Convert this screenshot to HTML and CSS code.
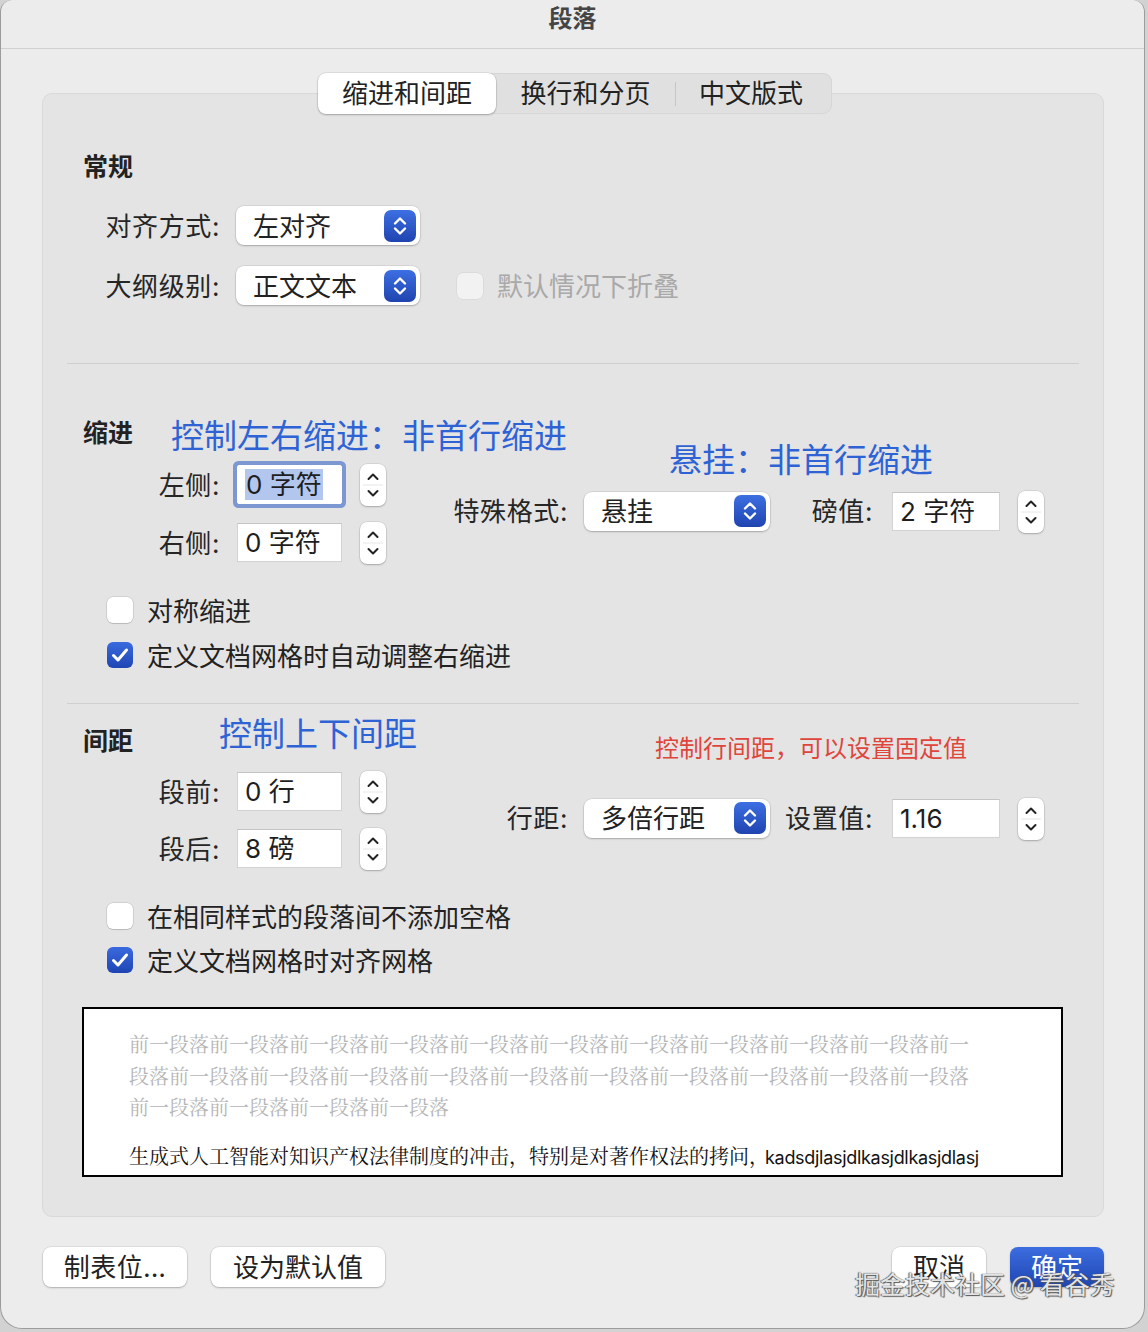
FILE: index.html
```html
<!DOCTYPE html>
<html lang="zh-CN">
<head>
<meta charset="utf-8">
<title>段落</title>
<link rel="stylesheet" href="styles.css">
</head>
<body>
<div class="window">
  <div class="titlebar">段落</div>
  <div class="content">
    <div class="tabs">
      <div class="tab t1 active">缩进和间距</div>
      <div class="tab t2">换行和分页</div>
      <div class="tab-sep"></div>
      <div class="tab t3">中文版式</div>
    </div>

    <div class="group">
      <div class="heading">常规</div>
      <div class="frow first">
        <span class="lbl">对齐方式:</span>
        <div class="select">左对齐<span class="sel-btn"><svg width="32" height="32" viewBox="0 0 32 32"><path d="M11 13.5 L16 8.5 L21 13.5 M11 18.5 L16 23.5 L21 18.5" fill="none" stroke="#fff" stroke-width="2.4" stroke-linecap="round" stroke-linejoin="round"/></svg></span></div>
      </div>
      <div class="frow second">
        <span class="lbl">大纲级别:</span>
        <div class="select">正文文本<span class="sel-btn"><svg width="32" height="32" viewBox="0 0 32 32"><path d="M11 13.5 L16 8.5 L21 13.5 M11 18.5 L16 23.5 L21 18.5" fill="none" stroke="#fff" stroke-width="2.4" stroke-linecap="round" stroke-linejoin="round"/></svg></span></div>
        <span class="cb disabled"></span><span class="cbtext muted">默认情况下折叠</span>
      </div>

      <div class="divider d1"></div>

      <div class="hrow h-indent">
        <span class="heading">缩进</span>
        <span class="note note-indent">控制左右缩进：非首行缩进</span>
      </div>
      <div class="fields f-indent">
        <span class="note note-hang">悬挂：非首行缩进</span>
        <div class="lcol">
          <div class="lrow">
            <span class="lbl">左侧:</span>
            <div class="input focus"><span class="sel-text">0 字符</span></div>
            <span class="stepper"><svg width="26" height="42" viewBox="0 0 26 42"><path d="M3 21 H23" stroke="#e6e6e6" stroke-width="1"/><path d="M8.5 15 L13 10.5 L17.5 15 M8.5 27 L13 31.5 L17.5 27" fill="none" stroke="#222" stroke-width="2" stroke-linecap="round" stroke-linejoin="round"/></svg></span>
          </div>
          <div class="lrow">
            <span class="lbl">右侧:</span>
            <div class="input">0 字符</div>
            <span class="stepper"><svg width="26" height="42" viewBox="0 0 26 42"><path d="M3 21 H23" stroke="#e6e6e6" stroke-width="1"/><path d="M8.5 15 L13 10.5 L17.5 15 M8.5 27 L13 31.5 L17.5 27" fill="none" stroke="#222" stroke-width="2" stroke-linecap="round" stroke-linejoin="round"/></svg></span>
          </div>
        </div>
        <div class="rrow">
          <span class="rlbl1">特殊格式:</span>
          <div class="select wide">悬挂<span class="sel-btn"><svg width="32" height="32" viewBox="0 0 32 32"><path d="M11 13.5 L16 8.5 L21 13.5 M11 18.5 L16 23.5 L21 18.5" fill="none" stroke="#fff" stroke-width="2.4" stroke-linecap="round" stroke-linejoin="round"/></svg></span></div>
          <span class="rlbl2">磅值:</span>
          <div class="input rin">2 字符</div>
          <span class="stepper"><svg width="26" height="42" viewBox="0 0 26 42"><path d="M3 21 H23" stroke="#e6e6e6" stroke-width="1"/><path d="M8.5 15 L13 10.5 L17.5 15 M8.5 27 L13 31.5 L17.5 27" fill="none" stroke="#222" stroke-width="2" stroke-linecap="round" stroke-linejoin="round"/></svg></span>
        </div>
      </div>

      <div class="cbrow c1"><span class="cb"></span><span class="cbtext">对称缩进</span></div>
      <div class="cbrow c2"><span class="cb on"><svg width="26" height="26" viewBox="0 0 26 26"><path d="M6.5 13.5 L11 18 L19.5 8" fill="none" stroke="#fff" stroke-width="3" stroke-linecap="round" stroke-linejoin="round"/></svg></span><span class="cbtext">定义文档网格时自动调整右缩进</span></div>

      <div class="divider d2"></div>

      <div class="hrow h-space">
        <span class="heading">间距</span>
        <span class="note note-space">控制上下间距</span>
      </div>
      <div class="fields f-space">
        <span class="note-red">控制行间距，可以设置固定值</span>
        <div class="lcol gap18">
          <div class="lrow">
            <span class="lbl">段前:</span>
            <div class="input">0 行</div>
            <span class="stepper"><svg width="26" height="42" viewBox="0 0 26 42"><path d="M3 21 H23" stroke="#e6e6e6" stroke-width="1"/><path d="M8.5 15 L13 10.5 L17.5 15 M8.5 27 L13 31.5 L17.5 27" fill="none" stroke="#222" stroke-width="2" stroke-linecap="round" stroke-linejoin="round"/></svg></span>
          </div>
          <div class="lrow">
            <span class="lbl">段后:</span>
            <div class="input">8 磅</div>
            <span class="stepper"><svg width="26" height="42" viewBox="0 0 26 42"><path d="M3 21 H23" stroke="#e6e6e6" stroke-width="1"/><path d="M8.5 15 L13 10.5 L17.5 15 M8.5 27 L13 31.5 L17.5 27" fill="none" stroke="#222" stroke-width="2" stroke-linecap="round" stroke-linejoin="round"/></svg></span>
          </div>
        </div>
        <div class="rrow">
          <span class="rlbl1">行距:</span>
          <div class="select wide">多倍行距<span class="sel-btn"><svg width="32" height="32" viewBox="0 0 32 32"><path d="M11 13.5 L16 8.5 L21 13.5 M11 18.5 L16 23.5 L21 18.5" fill="none" stroke="#fff" stroke-width="2.4" stroke-linecap="round" stroke-linejoin="round"/></svg></span></div>
          <span class="rlbl2">设置值:</span>
          <div class="input rin">1.16</div>
          <span class="stepper"><svg width="26" height="42" viewBox="0 0 26 42"><path d="M3 21 H23" stroke="#e6e6e6" stroke-width="1"/><path d="M8.5 15 L13 10.5 L17.5 15 M8.5 27 L13 31.5 L17.5 27" fill="none" stroke="#222" stroke-width="2" stroke-linecap="round" stroke-linejoin="round"/></svg></span>
        </div>
      </div>

      <div class="cbrow c3"><span class="cb"></span><span class="cbtext">在相同样式的段落间不添加空格</span></div>
      <div class="cbrow c4"><span class="cb on"><svg width="26" height="26" viewBox="0 0 26 26"><path d="M6.5 13.5 L11 18 L19.5 8" fill="none" stroke="#fff" stroke-width="3" stroke-linecap="round" stroke-linejoin="round"/></svg></span><span class="cbtext">定义文档网格时对齐网格</span></div>

      <div class="preview">
        <div class="pv-gray">前一段落前一段落前一段落前一段落前一段落前一段落前一段落前一段落前一段落前一段落前一</div>
        <div class="pv-gray">段落前一段落前一段落前一段落前一段落前一段落前一段落前一段落前一段落前一段落前一段落</div>
        <div class="pv-gray">前一段落前一段落前一段落前一段落</div>
        <div class="pv-main">生成式人工智能对知识产权法律制度的冲击，特别是对著作权法的拷问，<span class="latin">kadsdjlasjdlkasjdlkasjdlasj</span></div>
      </div>
    </div>

    <div class="buttons">
      <div class="btn b-tabs">制表位...</div>
      <div class="btn b-default">设为默认值</div>
      <div class="btn b-cancel">取消</div>
      <div class="btn b-ok">确定</div>
    </div>
  </div>
  <div class="watermark">掘金技术社区 @ 看谷秀</div>
</div>
</body>
</html>
```

FILE: styles.css
```css
* { box-sizing: border-box; }
html, body { margin: 0; padding: 0; }
body {
  width: 1148px;
  height: 1332px;
  overflow: hidden;
  background: #d2d2d2;
  font-family: "Inter", "Noto Sans CJK SC", sans-serif;
  color: #262626;
}
.window {
  position: relative;
  width: 1145px;
  height: 1329px;
  background: #ececec;
  border: 1px solid #9c9c9c;
  border-top: none;
  border-radius: 12px 12px 22px 22px;
  overflow: hidden;
}
.titlebar {
  height: 49px;
  border-bottom: 1px solid #d0d0d0;
  text-align: center;
  font-size: 24px;
  font-weight: 700;
  line-height: 34px;
  color: #454545;
  font-family: "Noto Sans CJK SC", sans-serif;
}
.content {
  padding: 24px 40px 0 41px;
}
.tabs {
  position: relative;
  z-index: 2;
  display: flex;
  align-items: center;
  margin-left: 276px;
  width: 514px;
  height: 41px;
  margin-bottom: -21px;
  background: #e0e0e0;
  border-radius: 9px;
  box-shadow: inset 0 0 0 1px #d6d6d6;
}
.tab {
  height: 41px;
  display: flex;
  align-items: center;
  justify-content: center;
  padding-bottom: 4px;
  font-size: 26px;
  color: #222;
  font-family: "Noto Sans CJK SC", sans-serif;
}
.t1 { width: 178px; }
.t2 { width: 179px; }
.t3 { width: 156px; padding-right: 6px; }
.tab-sep { width: 1px; height: 24px; background: #c6c6c6; }
.tab.active {
  background: #fff;
  border-radius: 8px;
  box-shadow: 0 0 0 0.5px rgba(0,0,0,0.12), 0 1px 2px rgba(0,0,0,0.25);
}
.group {
  background: #e4e4e4;
  border: 1px solid #d9d9d9;
  border-radius: 10px;
  padding: 58px 0 39px 0;
}
.heading {
  font-size: 25px;
  font-weight: 700;
  line-height: 26px;
  height: 30px;
  padding-left: 40px;
  padding-bottom: 4px;
  color: #222;
  font-family: "Noto Sans CJK SC", sans-serif;
}
.frow {
  display: flex;
  align-items: center;
  height: 39px;
}
.frow.first { margin-top: 24px; }
.frow.second { margin-top: 21px; }
.lbl {
  flex: none;
  width: 177px;
  text-align: right;
  font-size: 26px;
  padding-bottom: 3px;
  letter-spacing: 0.6px;
}
.select {
  flex: none;
  margin-left: 16px;
  width: 184px;
  height: 39px;
  background: #fff;
  border-radius: 8px;
  box-shadow: 0 0 0 0.5px rgba(0,0,0,0.12), 0 1px 2px rgba(0,0,0,0.22);
  display: flex;
  align-items: center;
  padding-left: 17px;
  padding-bottom: 3px;
  font-size: 26px;
  color: #222;
}
.select.wide { width: 186px; }
.sel-btn {
  margin-left: auto;
  margin-right: 4px;
  margin-bottom: -3px;
  width: 32px;
  height: 32px;
  border-radius: 7px;
  background: linear-gradient(#3d6fe2, #1f44b0);
  display: flex;
  align-items: center;
  justify-content: center;
}
.cb {
  flex: none;
  width: 26px;
  height: 26px;
  border-radius: 6px;
  background: #fff;
  box-shadow: 0 0 0 0.5px rgba(0,0,0,0.16), 0 1px 1px rgba(0,0,0,0.12);
  display: flex;
}
.cb.disabled { background: #f2f2f2; box-shadow: 0 0 0 0.5px rgba(0,0,0,0.08); }
.frow .cb { margin-left: 37px; }
.cb.on { background: linear-gradient(#3a6ae0, #1f45b3); box-shadow: none; }
.cbtext { margin-left: 14px; font-size: 26px; color: #222; padding-bottom: 2px; }
.cbtext.muted { color: #a9a9a9; }
.divider {
  height: 1px;
  background: #cfcfcf;
  margin: 0 24px;
}
.d1 { margin-top: 58px; }
.d2 { margin-top: 33px; }
.hrow {
  display: flex;
  align-items: center;
  height: 36px;
}
.h-indent { margin-top: 51px; }
.h-space { margin-top: 19px; }
.note {
  color: #2e63d6;
  font-size: 33px;
  line-height: 40px;
  font-family: "Noto Sans CJK SC", sans-serif;
  white-space: nowrap;
}
.note-indent { margin-left: 38px; margin-top: 2px; }
.note-space { margin-left: 86px; margin-top: -18px; }
.fields {
  position: relative;
  display: flex;
  align-items: flex-start;
}
.f-indent { margin-top: 14px; }
.f-space { margin-top: 13px; }
.note-hang {
  position: absolute;
  left: 626px;
  top: -27px;
}
.note-red {
  position: absolute;
  left: 612px;
  top: -40px;
  color: #e0453b;
  font-size: 24px;
  line-height: 30px;
  white-space: nowrap;
  font-family: "Noto Sans CJK SC", sans-serif;
}
.lcol { display: flex; flex-direction: column; gap: 19px; }
.lcol.gap18 { gap: 18px; }
.lrow { display: flex; align-items: center; height: 39px; }
.input {
  flex: none;
  margin-left: 17px;
  width: 105px;
  height: 39px;
  background: #fff;
  border: 1px solid #d2d2d2;
  border-top-color: #c4c4c4;
  padding-left: 7px;
  font-size: 26px;
  line-height: 38px;
  color: #1e1e1e;
  white-space: nowrap;
}
.input.focus {
  border-color: #fff;
  box-shadow: 0 0 0 4px #7c97d1;
  border-radius: 2px;
}
.sel-text { background: #b3c7ee; padding: 0 1px; }
.stepper {
  flex: none;
  margin-left: 18px;
  width: 26px;
  height: 42px;
  margin-top: -1px;
  margin-bottom: -2px;
  background: #fff;
  border-radius: 7px;
  box-shadow: 0 0 0 0.5px rgba(0,0,0,0.12), 0 1px 2px rgba(0,0,0,0.22);
  display: flex;
}
.rrow {
  display: flex;
  align-items: center;
  height: 40px;
  margin-left: 54px;
  margin-top: 26px;
}
.rlbl1, .rlbl2 {
  flex: none;
  text-align: right;
  font-size: 26px;
  padding-bottom: 3px;
  letter-spacing: 0.6px;
}
.rlbl1 { width: 128px; }
.rlbl2 { width: 103px; }
.input.rin { margin-left: 19px; width: 108px; }
.cbrow {
  display: flex;
  align-items: center;
  height: 30px;
  padding-left: 64px;
}
.c1 { margin-top: 33px; }
.c2 { margin-top: 15px; }
.c3 { margin-top: 33px; }
.c4 { margin-top: 14px; }
.preview {
  margin: 32px 40px 0 39px;
  background: #fff;
  border: 2px solid #000;
  padding: 19px 20px 3px 45px;
  height: 170px;
}
.pv-gray {
  font-family: "Noto Serif CJK SC", "Noto Sans CJK SC", serif;
  font-size: 20px;
  line-height: 31.5px;
  color: #b5b5b5;
  white-space: nowrap;
}
.pv-main {
  margin-top: 17px;
  font-family: "Noto Serif CJK SC", "Noto Sans CJK SC", serif;
  font-size: 20px;
  line-height: 32px;
  color: #111;
  white-space: nowrap;
}
.latin { font-family: "Inter", sans-serif; font-size: 18px; letter-spacing: -0.3px; margin-left: -4px; }
.buttons {
  display: flex;
  align-items: center;
  margin-top: 30px;
  margin-left: 1px;
}
.btn {
  height: 40px;
  border-radius: 8px;
  background: #fff;
  box-shadow: 0 0 0 0.5px rgba(0,0,0,0.12), 0 1px 2px rgba(0,0,0,0.22);
  display: flex;
  align-items: center;
  justify-content: center;
  padding-bottom: 3px;
  font-size: 26px;
  color: #222;
  font-family: "Noto Sans CJK SC", sans-serif;
}
.b-tabs { width: 144px; letter-spacing: 0.5px; }
.b-default { width: 174px; margin-left: 24px; }
.b-cancel { width: 94px; margin-left: auto; }
.b-ok {
  width: 94px;
  margin-left: 24px;
  background: linear-gradient(#3c6de0, #1f45b2);
  color: #fff;
  box-shadow: 0 1px 2px rgba(0,0,0,0.25);
}
.watermark {
  position: absolute;
  left: 854px;
  top: 1266px;
  font-size: 25px;
  line-height: 34px;
  color: rgba(250,250,250,0.9);
  text-shadow: 0 0 1px #4a4a4a, 1px 1px 1px #5a5a5a, -1px 0 1px #6a6a6a;
  white-space: nowrap;
  font-family: "Noto Sans CJK SC", sans-serif;
}
```
